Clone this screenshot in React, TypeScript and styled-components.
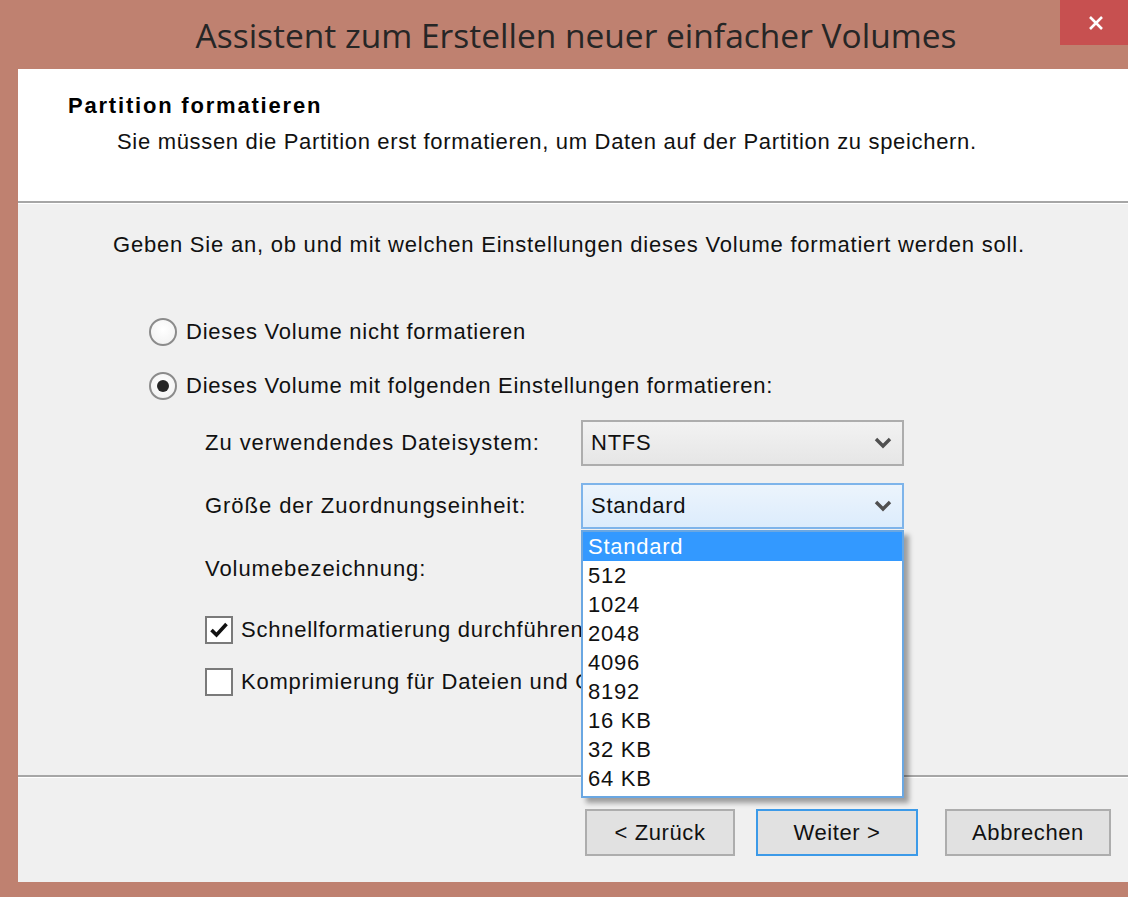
import React from "react";
import styled, { createGlobalStyle, css } from "styled-components";

const GlobalStyle = createGlobalStyle`
  html, body {
    margin: 0;
    padding: 0;
    background: #bf8170;
  }
  body {
    font-family: "Liberation Sans", Arial, sans-serif;
    color: #111;
  }
`;

const SIZES = ["Standard", "512", "1024", "2048", "4096", "8192", "16 KB", "32 KB", "64 KB"];

const Chevron = () => (
  <svg width="18" height="12" viewBox="0 0 18 12">
    <path d="M2 2 L9 9 L16 2" fill="none" stroke="#505050" strokeWidth="3.4" />
  </svg>
);

const CheckMark = () => (
  <svg width="20" height="18" viewBox="0 0 20 18">
    <path d="M2.5 9 L7.5 14 L17.5 3" fill="none" stroke="#111" strokeWidth="3.6" />
  </svg>
);

export default function App() {
  return (
    <>
      <GlobalStyle />
      <Frame>
        <TitleBar>
          <Title>Assistent zum Erstellen neuer einfacher Volumes</Title>
          <CloseButton aria-label="Schließen">
            <svg width="16" height="16" viewBox="0 0 16 16">
              <path d="M2 2 L14 14 M14 2 L2 14" stroke="#fff" strokeWidth="2.6" />
            </svg>
          </CloseButton>
        </TitleBar>
        <Client>
          <Header>
            <HeaderTitle>Partition formatieren</HeaderTitle>
            <HeaderText>
              Sie müssen die Partition erst formatieren, um Daten auf der Partition zu speichern.
            </HeaderText>
          </Header>
          <Divider />
          <Body>
            <Intro>Geben Sie an, ob und mit welchen Einstellungen dieses Volume formatiert werden soll.</Intro>
            <Options>
              <OptionRow>
                <Radio />
                <span>Dieses Volume nicht formatieren</span>
              </OptionRow>
              <OptionRow $gap={26}>
                <Radio $checked />
                <span>Dieses Volume mit folgenden Einstellungen formatieren:</span>
              </OptionRow>
              <Form>
                <FieldLabel>Zu verwendendes Dateisystem:</FieldLabel>
                <Combo>
                  <span>NTFS</span>
                  <Chevron />
                </Combo>
                <FieldLabel>Größe der Zuordnungseinheit:</FieldLabel>
                <ComboWrap>
                  <Combo $focused>
                    <span>Standard</span>
                    <Chevron />
                  </Combo>
                  <DropList>
                    {SIZES.map((s, i) => (
                      <DropItem key={s} $selected={i === 0}>
                        {s}
                      </DropItem>
                    ))}
                  </DropList>
                </ComboWrap>
                <FieldLabel>Volumebezeichnung:</FieldLabel>
                <TextInput />
              </Form>
              <CheckRow $gap={24}>
                <CheckBox>
                  <CheckMark />
                </CheckBox>
                <span>Schnellformatierung durchführen</span>
              </CheckRow>
              <CheckRow $gap={24}>
                <CheckBox />
                <span>Komprimierung für Dateien und Ordner aktivieren</span>
              </CheckRow>
            </Options>
          </Body>
          <Divider />
          <Footer>
            <Button $width={150}>&lt; Zurück</Button>
            <Button $width={162} $primary>
              Weiter &gt;
            </Button>
            <Button $width={166} $space={27}>
              Abbrechen
            </Button>
          </Footer>
        </Client>
      </Frame>
    </>
  );
}

const Frame = styled.div`
  width: 1128px;
  height: 897px;
  display: flex;
  flex-direction: column;
  overflow: hidden;
  background: #bf8170;
`;

const TitleBar = styled.div`
  position: relative;
  height: 69px;
  flex-shrink: 0;
`;

const Title = styled.div`
  padding: 2px 0 0 24px;
  text-align: center;
  font-family: "Open Sans", "Noto Sans", sans-serif;
  font-size: 33.5px;
  line-height: 67px;
  color: #262626;
  white-space: nowrap;
`;

const CloseButton = styled.div`
  position: absolute;
  top: 0;
  right: 0;
  width: 68px;
  height: 45px;
  background: #c75050;
  display: flex;
  align-items: center;
  justify-content: center;
  padding-left: 4px;
  box-sizing: border-box;
`;

const Client = styled.div`
  flex: 1;
  margin: 0 0 15px 18px;
  background: #f0f0f0;
  display: flex;
  flex-direction: column;
  font-size: 22px;
  line-height: 26px;
  letter-spacing: 0.75px;
`;

const Header = styled.div`
  height: 132px;
  flex-shrink: 0;
  background: #fff;
  padding: 24px 0 0 50px;
  box-sizing: border-box;
`;

const HeaderTitle = styled.div`
  font-weight: 700;
  color: #000;
  letter-spacing: 1.8px;
`;

const HeaderText = styled.div`
  margin-top: 10px;
  padding-left: 49px;
  letter-spacing: 0.68px;
`;

const Divider = styled.div`
  height: 0;
  border-top: 2px solid #a6a6a6;
  border-bottom: 1px solid #fff;
  flex-shrink: 0;
`;

const Body = styled.div`
  flex: 1;
  padding: 28px 0 0 95px;
  box-sizing: border-box;
  position: relative;
  z-index: 1;
`;

const Intro = styled.div`
  letter-spacing: 0.78px;
  white-space: nowrap;
`;

const Options = styled.div`
  display: flex;
  flex-direction: column;
  padding: 60px 0 0 36px;
`;

const OptionRow = styled.div<{ $gap?: number }>`
  display: flex;
  align-items: center;
  gap: 9px;
  height: 28px;
  margin-top: ${({ $gap }) => $gap ?? 0}px;
  white-space: nowrap;
`;

const Radio = styled.span<{ $checked?: boolean }>`
  width: 28px;
  height: 28px;
  box-sizing: border-box;
  border-radius: 50%;
  border: 2px solid #8b8b8b;
  background: radial-gradient(circle at 50% 40%, #ffffff 0%, #f4f4f4 70%, #e2e2e2 100%);
  flex-shrink: 0;
  position: relative;
  ${({ $checked }) =>
    $checked &&
    css`
      &::after {
        content: "";
        position: absolute;
        left: 6px;
        top: 6px;
        width: 12px;
        height: 12px;
        border-radius: 50%;
        background: #262626;
      }
    `}
`;

const Form = styled.div`
  display: grid;
  grid-template-columns: 376px 323px;
  grid-auto-rows: 46px;
  row-gap: 17px;
  margin: 20px 0 0 56px;
  align-items: center;
`;

const FieldLabel = styled.div`
  letter-spacing: 0.95px;
  white-space: nowrap;
`;

const ComboWrap = styled.div`
  position: relative;
  height: 46px;
`;

const Combo = styled.div<{ $focused?: boolean }>`
  height: 46px;
  box-sizing: border-box;
  display: flex;
  align-items: center;
  justify-content: space-between;
  padding: 0 10px 0 8px;
  border: 2px solid ${({ $focused }) => ($focused ? "#7eb4ea" : "#adadad")};
  background: ${({ $focused }) =>
    $focused
      ? "linear-gradient(#ecf4fc, #dcecfc)"
      : "linear-gradient(#f2f2f2, #e6e6e6)"};
`;

const DropList = styled.div`
  position: absolute;
  top: calc(100% + 1px);
  left: 0;
  width: 323px;
  box-sizing: border-box;
  border: 2px solid #6aa7e2;
  background: #fff;
  padding-bottom: 3px;
  box-shadow: 5px 5px 5px rgba(0, 0, 0, 0.35);
  z-index: 5;
`;

const DropItem = styled.div<{ $selected?: boolean }>`
  height: 29px;
  line-height: 29px;
  padding-left: 5px;
  color: ${({ $selected }) => ($selected ? "#fff" : "#111")};
  background: ${({ $selected }) => ($selected ? "#3399ff" : "transparent")};
`;

const TextInput = styled.div`
  height: 46px;
  box-sizing: border-box;
  border: 2px solid #adadad;
  background: #fff;
`;

const CheckRow = styled(OptionRow)`
  margin-left: 56px;
  gap: 8px;
`;

const CheckBox = styled.span`
  width: 28px;
  height: 28px;
  box-sizing: border-box;
  border: 2px solid #7a7a7a;
  background: #fff;
  display: flex;
  align-items: center;
  justify-content: center;
  flex-shrink: 0;
`;

const Footer = styled.div`
  height: 104px;
  flex-shrink: 0;
  display: flex;
  justify-content: flex-end;
  align-items: flex-start;
  gap: 21px;
  padding: 31px 17px 0 0;
  box-sizing: border-box;
`;

const Button = styled.div<{ $width: number; $primary?: boolean; $space?: number }>`
  width: ${({ $width }) => $width}px;
  height: 47px;
  box-sizing: border-box;
  display: flex;
  align-items: center;
  justify-content: center;
  margin-left: ${({ $space }) => ($space ? $space - 21 : 0)}px;
  border: 2px solid ${({ $primary }) => ($primary ? "#3c9ae8" : "#adadad")};
  background: #e1e1e1;
  letter-spacing: 0.6px;
`;
